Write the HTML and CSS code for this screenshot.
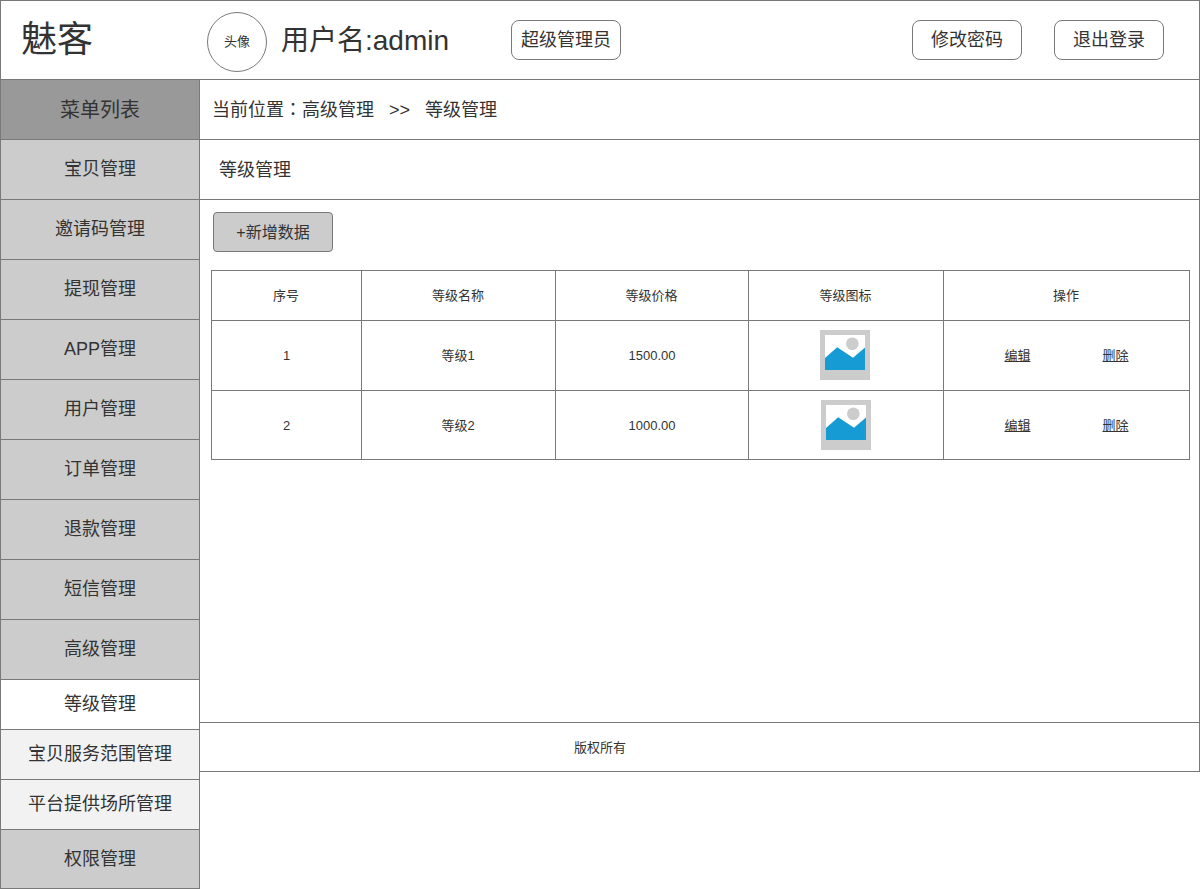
FILE: index.html
```html
<!DOCTYPE html>
<html lang="zh-CN">
<head>
<meta charset="utf-8">
<title>等级管理</title>
<link rel="stylesheet" href="styles.css">
</head>
<body>
<header class="header">
  <div class="logo">魅客</div>
  <div class="avatar">头像</div>
  <div class="username">用户名:admin</div>
  <div class="pill">超级管理员</div>
  <div class="header-actions">
    <div class="pill">修改密码</div>
    <div class="pill">退出登录</div>
  </div>
</header>
<div class="layout">
  <nav class="sidebar">
    <div class="menu-title">菜单列表</div>
    <div class="menu-item">宝贝管理</div>
    <div class="menu-item">邀请码管理</div>
    <div class="menu-item">提现管理</div>
    <div class="menu-item">APP管理</div>
    <div class="menu-item">用户管理</div>
    <div class="menu-item">订单管理</div>
    <div class="menu-item">退款管理</div>
    <div class="menu-item">短信管理</div>
    <div class="menu-item">高级管理</div>
    <div class="menu-sub menu-sub-active">等级管理</div>
    <div class="menu-sub">宝贝服务范围管理</div>
    <div class="menu-sub">平台提供场所管理</div>
    <div class="menu-item menu-last">权限管理</div>
  </nav>
  <main class="main">
    <div class="breadcrumb"><span>当前位置<span class="colon" lang="zh-TW">：</span>高级管理</span><span>&gt;&gt;</span><span>等级管理</span></div>
    <div class="page-title">等级管理</div>
    <section class="content">
      <div class="add-button">+新增数据</div>
      <div class="table">
        <div class="cell">序号</div>
        <div class="cell">等级名称</div>
        <div class="cell">等级价格</div>
        <div class="cell">等级图标</div>
        <div class="cell">操作</div>

        <div class="cell cell-number">1</div>
        <div class="cell">等级1</div>
        <div class="cell cell-number">1500.00</div>
        <div class="cell cell-picture"><svg class="picture" viewBox="0 0 50 50"><path fill="#ccc" d="M0 0h50v50H0z"/><path fill="#fff" d="M5 5h40v35H5z"/><circle cx="32.3" cy="13.7" r="6.3" fill="#ccc"/><path fill="#169bd5" d="M5 28 17.200 17.300 33 27.800 45 17.500V40H5z"/></svg></div>
        <div class="cell actions"><a>编辑</a><a>删除</a></div>

        <div class="cell cell-last cell-number">2</div>
        <div class="cell cell-last">等级2</div>
        <div class="cell cell-last cell-number">1000.00</div>
        <div class="cell cell-picture"><svg class="picture picture-shift" viewBox="0 0 50 50"><path fill="#ccc" d="M0 0h50v50H0z"/><path fill="#fff" d="M5 5h40v35H5z"/><circle cx="32.3" cy="13.7" r="6.3" fill="#ccc"/><path fill="#169bd5" d="M5 28 17.200 17.300 33 27.800 45 17.500V40H5z"/></svg></div>
        <div class="cell cell-last actions"><a>编辑</a><a>删除</a></div>
      </div>
    </section>
    <footer class="footer">版权所有</footer>
  </main>
</div>
</body>
</html>
```

FILE: styles.css
```css
* {
  box-sizing: border-box;
}

body {
  margin: 0;
  width: 1200px;
  height: 889px;
  overflow: hidden;
  background: #fff;
  color: #333;
  font-family: "Liberation Sans", "Noto Sans CJK SC", sans-serif;
  font-size: 13px;
  line-height: 20px;
  white-space: nowrap;
}

.header {
  display: flex;
  align-items: flex-start;
  height: 80px;
  border: 1px solid #797979;
}

.logo {
  width: 186px;
  margin-left: 20px;
  padding-top: 18px;
  font-size: 36px;
  line-height: 42px;
}

.avatar {
  width: 60px;
  height: 60px;
  margin-top: 11px;
  border: 1px solid #797979;
  border-radius: 50%;
  line-height: 58px;
  text-align: center;
}

.username {
  width: 230px;
  margin-left: 14px;
  padding-top: 24px;
  font-size: 28px;
  line-height: 32px;
}

.pill {
  width: 110px;
  height: 40px;
  margin-top: 19px;
  border: 1px solid #797979;
  border-radius: 8px;
  font-size: 18px;
  line-height: 39px;
  text-align: center;
}

.header-actions {
  display: flex;
  gap: 32px;
  margin-left: auto;
  margin-right: 35px;
}

.layout {
  display: flex;
  align-items: flex-start;
}

.sidebar {
  width: 200px;
  border: solid #797979;
  border-width: 0 1px;
  font-size: 18px;
  text-align: center;
}

.menu-title,
.menu-item,
.menu-sub {
  border-bottom: 1px solid #797979;
}

.menu-title {
  height: 60px;
  background: #999;
  font-size: 20px;
  line-height: 61px;
}

.menu-item {
  height: 60px;
  background: #ccc;
  line-height: 59px;
}

.menu-sub {
  height: 50px;
  background: #f2f2f2;
  line-height: 49px;
}

.menu-sub-active {
  background: #fff;
}

.menu-last {
  height: 59px;
}

.main {
  display: flex;
  flex-direction: column;
  width: 1000px;
  height: 692px;
  border: solid #797979;
  border-width: 0 1px 1px 0;
  font-size: 18px;
}

.breadcrumb,
.page-title {
  height: 60px;
  border-bottom: 1px solid #797979;
  line-height: 61px;
}

.breadcrumb {
  display: flex;
  gap: 15px;
  padding-left: 12px;
}

.colon {
  font-family: "Noto Sans CJK TC", sans-serif;
  line-height: 1;
}

.page-title {
  padding-left: 19px;
}

.content {
  flex: 1;
  padding: 12px 0 0 11px;
}

.add-button {
  width: 120px;
  height: 40px;
  margin: 0 0 18px 2px;
  border: 1px solid #797979;
  border-radius: 4px;
  background: #ccc;
  font-size: 16px;
  line-height: 39px;
  text-align: center;
}

.table {
  display: grid;
  grid-template-columns: 150px 194px 193px 195px 246px;
  grid-template-rows: 50px 70px 69px;
  width: 979px;
  border: solid #797979;
  border-width: 1px 0 0 1px;
  font-size: 13px;
}

.cell {
  display: flex;
  align-items: center;
  justify-content: center;
  padding-right: 1px;
  border: solid #797979;
  border-width: 0 1px 1px 0;
}

.cell-number {
  padding-right: 0;
}

.cell-last {
  padding-top: 1px;
}

.cell-picture {
  align-items: flex-start;
  justify-content: flex-start;
  padding: 9px 0 0 71px;
}

.picture {
  display: block;
  width: 50px;
  height: 50px;
}

.picture-shift {
  margin-left: 1px;
}

.actions {
  gap: 72px;
  padding-right: 0;
}

.actions a {
  text-decoration: underline;
}

.footer {
  height: 49px;
  padding-right: 199px;
  border-top: 1px solid #797979;
  line-height: 49px;
  font-size: 13px;
  text-align: center;
}
```
